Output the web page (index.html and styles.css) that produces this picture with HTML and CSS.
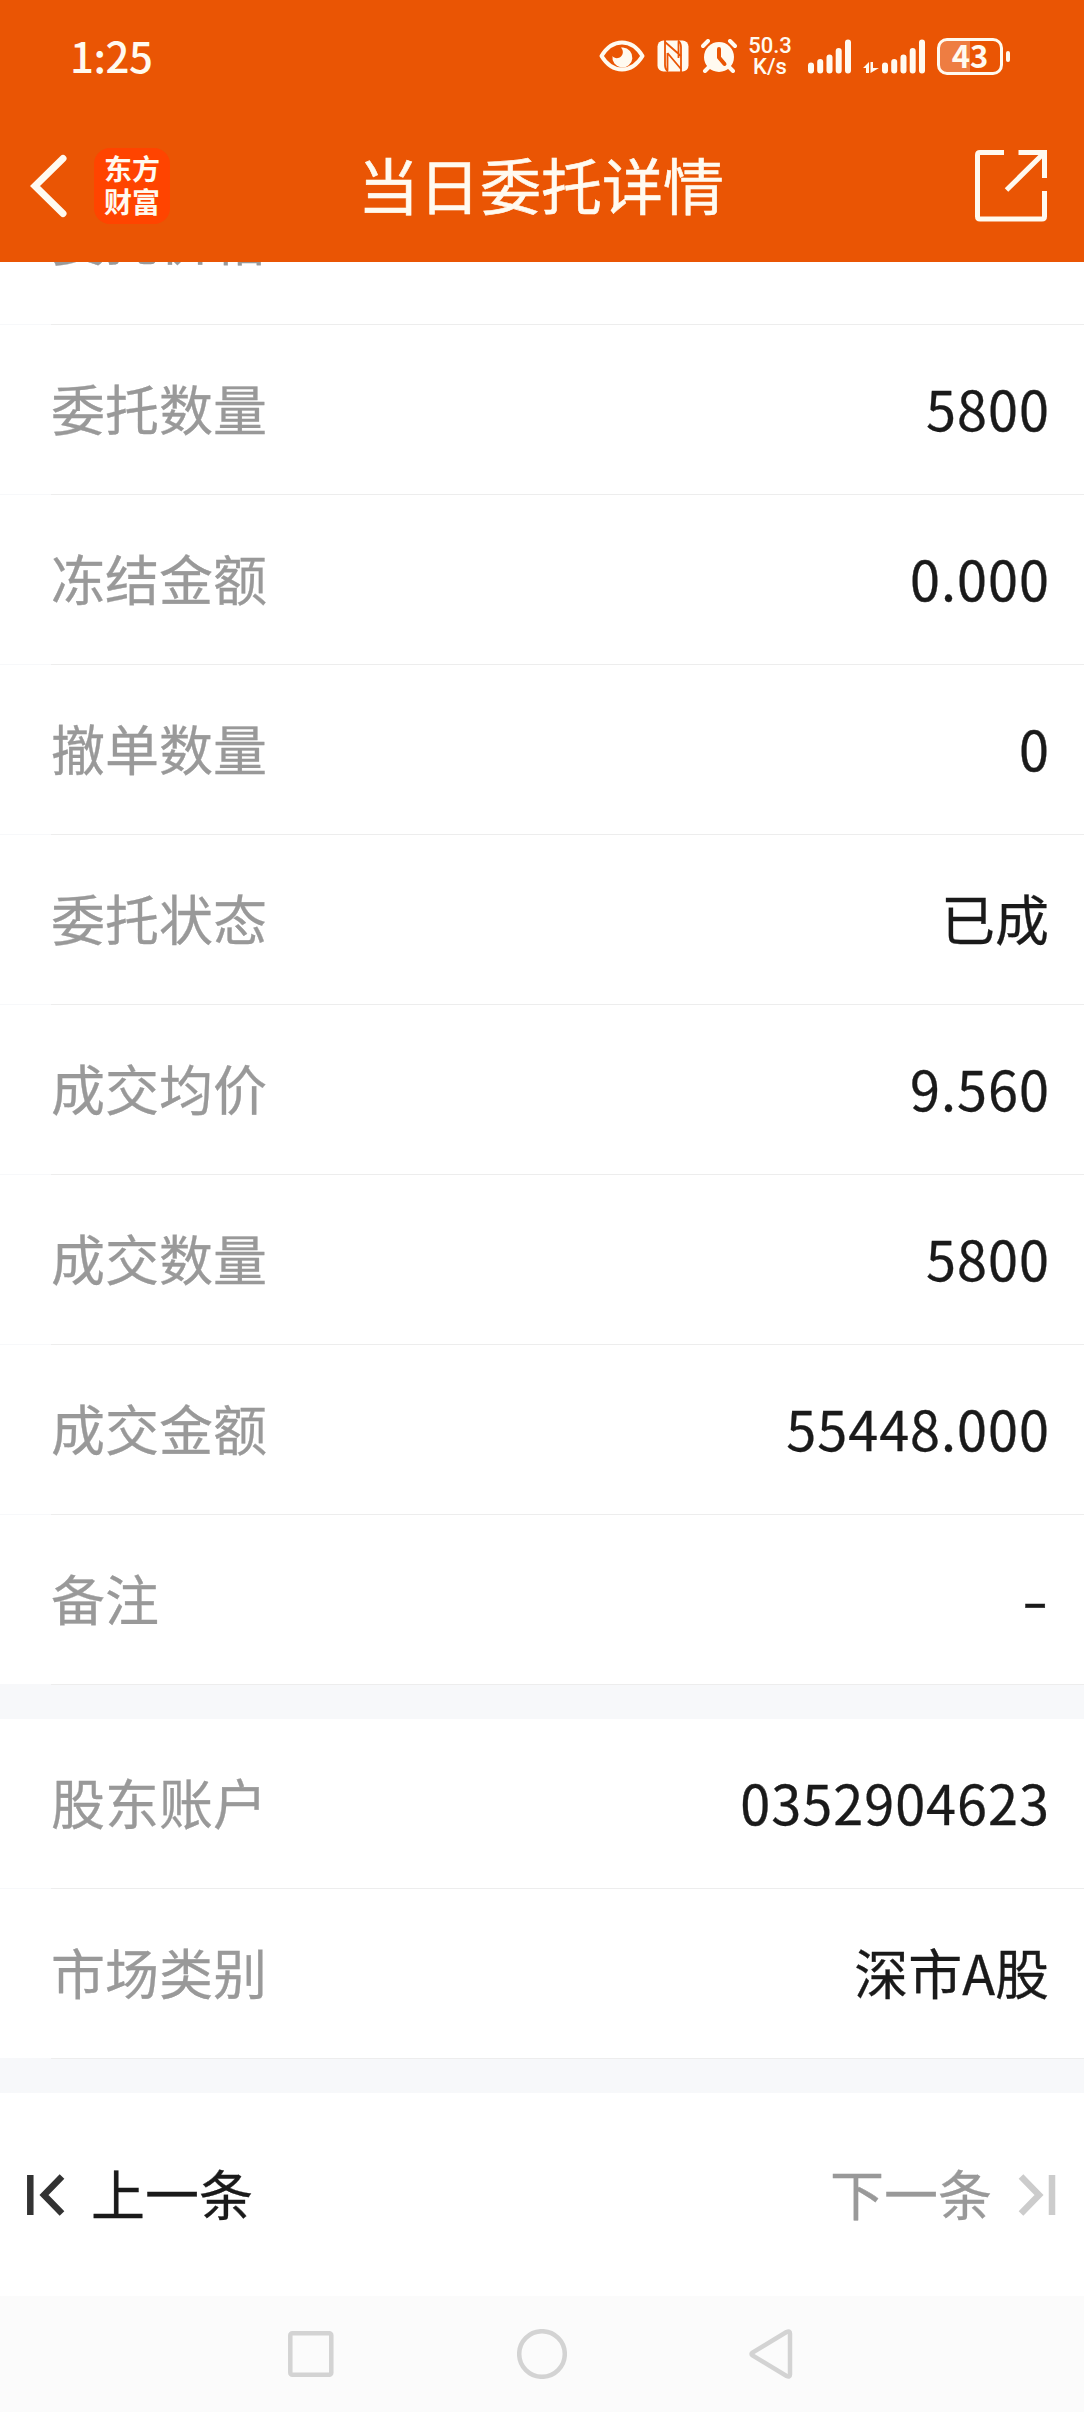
FILE: index.html
```html
<!DOCTYPE html>
<html lang="zh-CN">
<head>
    <meta charset="UTF-8">
    <meta name="viewport" content="width=device-width, initial-scale=1">
    <title>当日委托详情</title>
    <link rel="stylesheet" href="styles.css">
</head>
<body>
    <div class="page">
        <header class="header">
            <div class="status">
                <span class="time">1:25</span>
                <div class="statusIcons">
                    <svg class="eye" width="46" height="32" viewBox="0 0 46 32">
                        <path d="M2.5 16C8 7 15 2.5 23 2.5S38 7 43.500 16C38 25 31 29.500 23 29.500S8 25 2.500 16Z" fill="none" stroke="#fffaf0" stroke-width="4" stroke-linejoin="round"/>
                        <path d="M24 7.500a10 10 0 1 1-10.500 8.500c1.500 2.500 6 3 8.500 0.500c2.500-2.500 2.500-6 0-9z" fill="#fffaf0"/>
                    </svg>
                    <svg class="nfc" width="32" height="32" viewBox="0 0 32 32">
                        <rect x="0.500" y="0.500" width="31" height="31" rx="6" fill="#fffaf0"/>
                        <path d="M8 0V25Q8 29 11 31.500M24 32V7Q24 3 21 0.500" stroke="#ea5504" stroke-width="1.800" fill="none"/>
                        <path d="M8 2L24 16M10.500 13V30M21.500 2V18M10.500 13L24 29" stroke="#ea5504" stroke-width="1.800" fill="none"/>
                    </svg>
                    <svg class="alarm" width="36" height="34" viewBox="0 0 36 34">
                        <circle cx="18" cy="18" r="15" fill="#fffaf0"/>
                        <path d="M2 7L7 2M34 7L29 2M4 32L8 28M32 32L28 28" stroke="#fffaf0" stroke-width="4" stroke-linecap="round"/>
                        <path d="M18 10V18.500L23.500 25" stroke="#ea5504" stroke-width="4" stroke-linecap="round" stroke-linejoin="round" fill="none"/>
                    </svg>
                    <div class="speed"><span>50.3</span><span>K/s</span></div>
                    <svg class="signal" width="44" height="35" viewBox="0 0 44 35">
                        <path d="M3 26.500V31.500M12.200 23V31.500M21.500 18.500V31.500M30.700 12V31.500M40 3.500V31.500" stroke="#fffaf0" stroke-width="6" stroke-linecap="round"/>
                    </svg>
                    <svg class="signal2" width="63" height="35" viewBox="0 0 63 35">
                        <path d="M0 29L6 23V34H3V29ZM10 23V29H16L7.500 34V23Z" fill="#fffaf0"/>
                        <path d="M22 26.500V31.500M31.200 23V31.500M40.500 18.500V31.500M49.700 12V31.500M59 3.500V31.500" stroke="#fffaf0" stroke-width="6" stroke-linecap="round"/>
                    </svg>
                    <div class="battery"><span>43</span></div>
                    <i class="nub"></i>
                </div>
            </div>
            <div class="titleBar">
                <div class="left">
                    <svg width="38" height="64" viewBox="0 0 38 64">
                        <path d="M34 4.500L6 32L34 59.500" fill="none" stroke="#fffaf0" stroke-width="7" stroke-linecap="round"/>
                    </svg>
                    <div class="logo"><span>东方</span><span>财富</span></div>
                </div>
                <h1>当日委托详情</h1>
                <svg class="share" width="72" height="72" viewBox="0 0 72 72">
                    <path d="M29 2.500H5Q2.500 2.500 2.500 5V66.500Q2.500 69 5 69H67Q69.500 69 69.500 66.500V41M43.500 2.500H69.500V28M69 3L31.500 40" fill="none" stroke="#fffaf0" stroke-width="5"/>
                </svg>
            </div>
        </header>

        <main class="list">
            <div class="row cut"><label>委托价格</label></div>
            <div class="row"><label>委托数量</label><b>5800</b></div>
            <div class="row"><label>冻结金额</label><b>0.000</b></div>
            <div class="row"><label>撤单数量</label><b>0</b></div>
            <div class="row"><label>委托状态</label><b class="cn">已成</b></div>
            <div class="row"><label>成交均价</label><b>9.560</b></div>
            <div class="row"><label>成交数量</label><b>5800</b></div>
            <div class="row"><label>成交金额</label><b>55448.000</b></div>
            <div class="row"><label>备注</label><b class="none">-</b></div>
            <div class="space"></div>
            <div class="row"><label>股东账户</label><b>0352904623</b></div>
            <div class="row"><label>市场类别</label><b class="cn">深市A股</b></div>
            <div class="space"></div>
        </main>

        <div class="pager">
            <a class="prev">
                <svg width="38" height="42" viewBox="0 0 38 42">
                    <path d="M3.300 1V41M35 2.500L17 21L35 39.500" fill="none" stroke="#333" stroke-width="6.500"/>
                </svg>
                <span>上一条</span>
            </a>
            <a class="next">
                <span>下一条</span>
                <svg width="38" height="42" viewBox="0 0 38 42">
                    <path d="M34 1V41M3 2.500L21 21L3 39.500" fill="none" stroke="#ccc" stroke-width="6.500"/>
                </svg>
            </a>
        </div>

        <nav class="sysNav">
            <svg width="46" height="46" viewBox="0 0 46 46"><rect x="2.300" y="2.300" width="41" height="41.400" rx="2"/></svg>
            <svg width="50" height="50" viewBox="0 0 50 50"><circle cx="25" cy="25" r="22.800"/></svg>
            <svg width="44" height="50" viewBox="0 0 44 50"><path d="M37.500 3L3.500 23.500Q1.500 25 3.500 26.500L37.500 47Q41 48.500 41 45.500V4.500Q41 1.500 37.500 3Z"/></svg>
        </nav>
    </div>
</body>
</html>
```
FILE: styles.css
```css
* {
    box-sizing: border-box;
}
body {
    margin: 0;
    background: #fff;
    font-family: "Noto Sans CJK SC", sans-serif;
}
svg {
    display: block;
    flex: none;
}
.page {
    width: 1084px;
    height: 2412px;
    overflow: hidden;
    display: flex;
    flex-direction: column;
}

/* 顶部 */
.header {
    height: 262px;
    flex: none;
    background: #ea5504;
    color: #fffaf0;
}
.status {
    height: 112px;
    padding: 0 74px 0 70px;
    display: flex;
    justify-content: space-between;
    align-items: center;
}
.time {
    padding-bottom: 3px;
    font-size: 42px;
    font-weight: 500;
    line-height: 60px;
    letter-spacing: -0.5px;
}
.statusIcons {
    display: flex;
    align-items: center;
}
.nfc {
    margin-left: 12px;
}
.alarm {
    margin-left: 12px;
}
.speed {
    width: 44px;
    margin-left: 11px;
    display: flex;
    flex-direction: column;
    align-items: center;
    font: 500 22px/21px Roboto, sans-serif;
}
.signal {
    margin-left: 16px;
}
.signal2 {
    margin-left: 11px;
}
.battery {
    width: 66px;
    height: 37px;
    margin-left: 11px;
    padding-bottom: 3px;
    border: 3px solid #fffaf0;
    border-radius: 10px;
    background: linear-gradient(90deg, #ee7d42 50%, #ea5504 50%);
    display: flex;
    align-items: center;
    justify-content: center;
    font-size: 31px;
    font-weight: 700;
    line-height: 31px;
}
.nub {
    width: 4px;
    height: 11px;
    margin-left: 3px;
    border-radius: 2px;
    background: #fffaf0;
}
.titleBar {
    height: 148px;
    padding: 0 37px 0 29px;
    display: flex;
    align-items: center;
    justify-content: space-between;
}
.titleBar .left {
    width: 150px;
    display: flex;
    align-items: center;
}
.logo {
    width: 76px;
    height: 76px;
    margin-left: 27px;
    padding-top: 4px;
    border-radius: 16px;
    background: #ff4400;
    display: flex;
    flex-direction: column;
    align-items: center;
    font-size: 28px;
    font-weight: 700;
    line-height: 33px;
}
.titleBar h1 {
    flex: 1;
    margin: 0;
    padding: 0 142px 4px 70px;
    text-align: center;
    white-space: nowrap;
    font-size: 61px;
    font-weight: 400;
    line-height: 80px;
    -webkit-text-stroke: 0.6px;
}

/* 列表 */
.list {
    flex: none;
    overflow: hidden;
    background: #f7f8fa;
}
.row {
    height: 170px;
    padding: 0 35px 4px 51px;
    display: flex;
    align-items: center;
    justify-content: space-between;
    background: linear-gradient(#ededed, #ededed) 51px 169px no-repeat, linear-gradient(#fff, #fff) 0 0 / 100% 169px no-repeat;
}
.row.cut {
    margin-top: -107px;
}
.row label {
    font-size: 54px;
    line-height: 80px;
    color: #999;
    -webkit-text-stroke: 0.3px;
}
.row b {
    margin-right: -1px;
    font-size: 54px;
    font-weight: 400;
    line-height: 80px;
    letter-spacing: 1px;
    color: #1a1a1a;
    -webkit-text-stroke: 0.3px;
}
.row b.cn {
    margin-right: 0;
    letter-spacing: 0;
}
.row b.none {
    transform: scaleX(1.4);
    transform-origin: right;
}
.space {
    height: 34px;
}

/* 上一条 下一条 */
.pager {
    height: 203px;
    flex: none;
    padding: 0 28px 0 27px;
    display: flex;
    align-items: center;
    justify-content: space-between;
    font-size: 54px;
    line-height: 80px;
}
.pager a {
    display: flex;
    align-items: center;
}
.pager span {
    padding-bottom: 4px;
    -webkit-text-stroke: 0.3px;
}
.prev {
    color: #1a1a1a;
}
.prev svg {
    margin-right: 26px;
}
.next {
    color: #999;
}
.next svg {
    margin-left: 26px;
}

.sysNav {
    flex: 1;
    padding: 0 291px 0 288px;
    background: #fbfbfb;
    display: flex;
    align-items: center;
    justify-content: space-between;
}
.sysNav svg {
    fill: none;
    stroke: #d3d3d3;
    stroke-width: 4.500;
}
```
